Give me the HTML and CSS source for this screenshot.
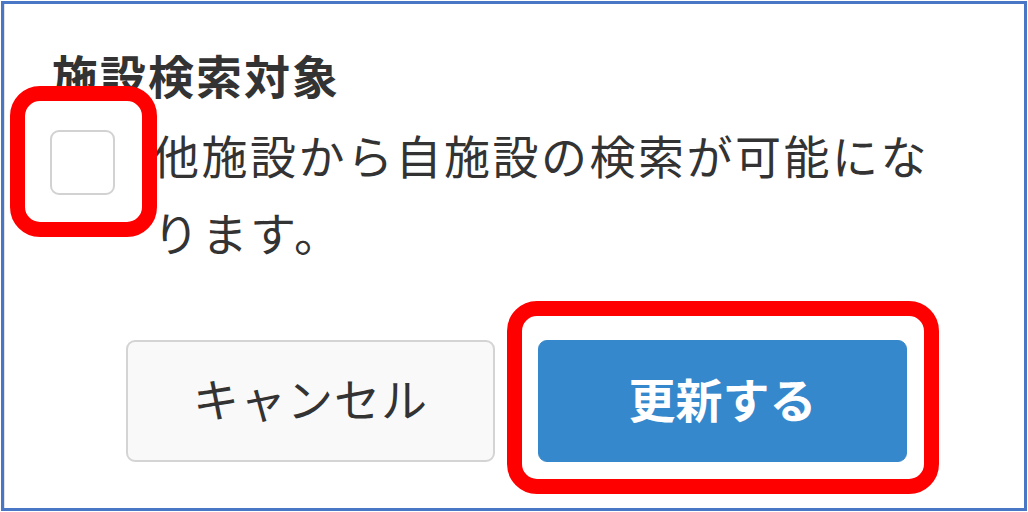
FILE: index.html
```html
<!DOCTYPE html>
<html lang="ja">
<head>
<meta charset="utf-8">
<title>施設検索対象</title>
<link rel="stylesheet" href="styles.css">
</head>
<body>
<div class="frame">
  <h2 class="title">施設検索対象</h2>
  <div class="option">
    <span class="check-wrap">
      <input type="checkbox" class="check" aria-label="施設検索対象">
      <span class="mark mark-check"></span>
    </span>
    <p class="option-text">他施設から自施設の検索が可能になります。</p>
  </div>
  <div class="actions">
    <button class="btn btn-cancel" type="button">キャンセル</button>
    <span class="btn-wrap">
      <button class="btn btn-primary" type="button">更新する</button>
      <span class="mark mark-btn"></span>
    </span>
  </div>
</div>
</body>
</html>
```

FILE: styles.css
```css
html, body {
  margin: 0;
  padding: 0;
  background: #ffffff;
}

body {
  font-family: "Noto Sans CJK JP", "Noto Sans", sans-serif;
  color: #333333;
}

.frame {
  box-sizing: border-box;
  width: 1026px;
  height: 510px;
  margin: 1px;
  border: 3px solid #4a76c6;
  box-shadow: inset 1px 0 0 #e2e2e2;
  padding: 41px 0 0 46px;
  overflow: hidden;
}

.title {
  margin: 0 0 0 2px;
  font-size: 46px;
  font-weight: 700;
  line-height: 58px;
  letter-spacing: 2px;
  color: #333333;
}

.option {
  display: flex;
  align-items: flex-start;
  margin-top: 13px;
}

.check-wrap {
  position: relative;
  display: block;
  width: 65px;
  height: 65px;
  margin-top: 14px;
  flex: none;
}

.check {
  appearance: none;
  -webkit-appearance: none;
  box-sizing: border-box;
  display: block;
  width: 65px;
  height: 65px;
  margin: 0;
  border: 2px solid #d2d2d2;
  border-radius: 9px;
  background: #ffffff;
}

.option-text {
  margin: 0 0 0 38px;
  width: 800px;
  font-size: 46px;
  line-height: 77px;
  letter-spacing: 2.5px;
  color: #333333;
}

.actions {
  display: flex;
  gap: 43px;
  margin-top: 70px;
  padding-left: 76px;
}

.btn {
  box-sizing: border-box;
  width: 369px;
  height: 122px;
  margin: 0;
  padding: 0 0 8px;
  font-family: "Noto Sans CJK JP", "Noto Sans", sans-serif;
  font-size: 46px;
  line-height: 1;
  border-radius: 9px;
  cursor: pointer;
}

.btn-cancel {
  background: #f9f9f9;
  border: 2px solid #d4d4d4;
  color: #333333;
  font-weight: 400;
  letter-spacing: 1px;
}

.btn-wrap {
  position: relative;
  display: block;
}

.btn-primary {
  display: block;
  background: #3588cc;
  border: 1px solid #3588cc;
  color: #ffffff;
  font-weight: 700;
  font-size: 47px;
}

.mark {
  position: absolute;
  box-sizing: border-box;
  border: 15px solid #ff0000;
  pointer-events: none;
}

.mark-check {
  left: -40px;
  top: -44px;
  right: -42px;
  bottom: -42px;
  border-radius: 30px;
}

.mark-btn {
  left: -31px;
  top: -39px;
  right: -32px;
  bottom: -32px;
  border-radius: 30px;
}
```
